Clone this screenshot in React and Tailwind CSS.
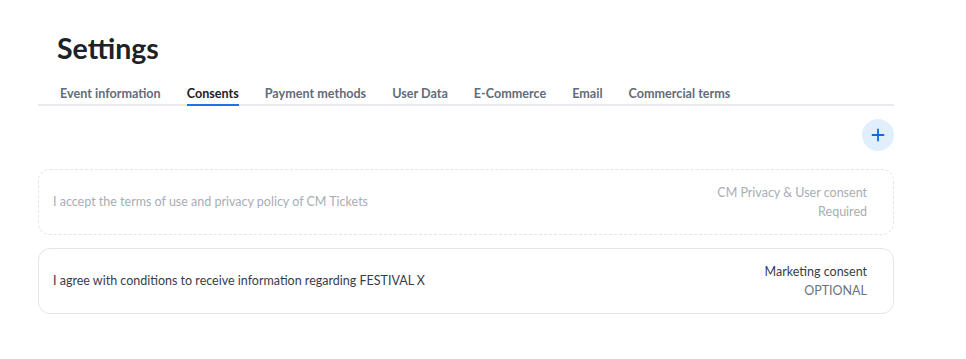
import React from "react";

const tabs = [
  "Event information",
  "Consents",
  "Payment methods",
  "User Data",
  "E-Commerce",
  "Email",
  "Commercial terms",
];

const consents = [
  {
    text: "I accept the terms of use and privacy policy of CM Tickets",
    type: "CM Privacy & User consent",
    status: "Required",
    locked: true,
  },
  {
    text: "I agree with conditions to receive information regarding FESTIVAL X",
    type: "Marketing consent",
    status: "OPTIONAL",
    locked: false,
  },
];

function PlusIcon() {
  return (
    <svg className="w-[14px] h-[14px]" viewBox="0 0 14 14" fill="none" stroke="currentColor" strokeWidth="1.8" strokeLinecap="round">
      <path d="M7 1.5v11M1.5 7h11" />
    </svg>
  );
}

export default function App() {
  return (
    <div className="min-h-[359px] bg-white font-['Lato',sans-serif] text-[#1f2933]">
      <div className="ml-[38px] w-[856px] pt-[31px]">
        <h1 className="pl-[19px] text-[28.5px] font-bold leading-[34px] text-[#1c2226]">Settings</h1>

        <div className="mt-[21px] flex gap-[26px] border-b-2 border-[#e8eaf0] pl-[22px]">
          {tabs.map((tab) => (
            <div
              key={tab}
              className={
                "text-[12.6px] font-bold leading-[16px] " +
                (tab === "Consents"
                  ? "-mb-[2px] border-b-2 border-[#1a73e8] text-[#1c2226]"
                  : "pb-[2px] text-[#646c7a]")
              }
            >
              {tab}
            </div>
          ))}
        </div>

        <div className="mt-[13px] flex justify-end">
          <button className="flex h-[32px] w-[32px] items-center justify-center rounded-full bg-[#e1eefc] text-[#0f6bd8]">
            <PlusIcon />
          </button>
        </div>

        <div className="mt-[18px] flex flex-col gap-[13px]">
          {consents.map((c) => (
            <div
              key={c.text}
              className={
                "flex h-[66px] items-center justify-between rounded-[12px] border pl-[14px] pr-[26px] text-[12.5px] " +
                (c.locked ? "border-dashed border-[#e3e5ea] text-[#a8adb5]" : "border-[#e3e5ea] text-[#363d4b]")
              }
            >
              <span>{c.text}</span>
              <div className="flex flex-col items-end leading-[19px]">
                <span>{c.type}</span>
                <span className={c.locked ? "" : "text-[#6b7280]"}>{c.status}</span>
              </div>
            </div>
          ))}
        </div>
      </div>
    </div>
  );
}
